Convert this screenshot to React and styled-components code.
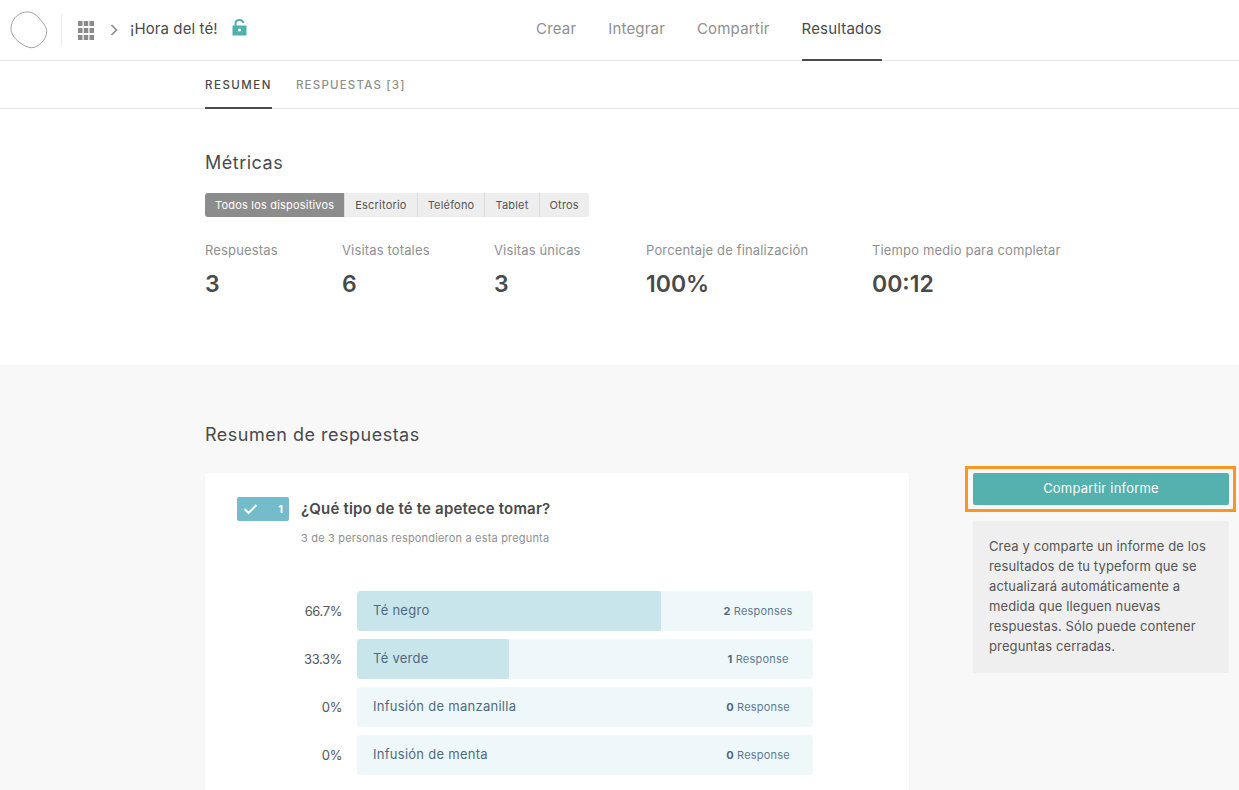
import React from "react";
import styled, { createGlobalStyle } from "styled-components";

const GlobalStyle = createGlobalStyle`
  html, body {
    margin: 0;
    padding: 0;
    background: #fff;
    font-family: Inter, "Liberation Sans", sans-serif;
    color: #4a4a4a;
  }
  * { box-sizing: border-box; }
`;

const tabs = ["Crear", "Integrar", "Compartir", "Resultados"];
const devices = ["Todos los dispositivos", "Escritorio", "Teléfono", "Tablet", "Otros"];
const metrics = [
  { label: "Respuestas", value: "3", width: 137 },
  { label: "Visitas totales", value: "6", width: 152 },
  { label: "Visitas únicas", value: "3", width: 152 },
  { label: "Porcentaje de finalización", value: "100%", width: 226 },
  { label: "Tiempo medio para completar", value: "00:12", width: 200 },
];
const answers = [
  { pct: 66.7, label: "66.7%", name: "Té negro", count: 2, unit: "Responses" },
  { pct: 33.3, label: "33.3%", name: "Té verde", count: 1, unit: "Response" },
  { pct: 0, label: "0%", name: "Infusión de manzanilla", count: 0, unit: "Response" },
  { pct: 0, label: "0%", name: "Infusión de menta", count: 0, unit: "Response" },
];

export default function App() {
  return (
    <Page>
      <GlobalStyle />
      <Header>
        <Brand>
          <svg width="38" height="38" viewBox="0 0 38 38" fill="none">
            <path
              d="M18.300 1C23 1.200 27 4.500 30 8.300C33 12 36.800 16 36.700 20C36.600 25 34.500 29 31.700 31.700C28.500 34.700 25 36.800 21.700 36.700C17.500 36.500 13.500 34.500 10 31.700C7.500 29.800 4.800 27.800 3.300 25C1.800 22 .7 19.500 1 16.700C1.300 13 2.800 9.500 5 6.700C8.500 2.800 13.500 .8 18.300 1Z"
              stroke="#a0a0a0"
              strokeWidth="1"
            />
          </svg>
          <Divider />
          <svg width="16" height="19" viewBox="0 0 16 19" fill="#8a8a8a">
            <rect x="0" y="0" width="4.500" height="5" />
            <rect x="5.750" y="0" width="4.500" height="5" />
            <rect x="11.500" y="0" width="4.500" height="5" />
            <rect x="0" y="7" width="4.500" height="5" />
            <rect x="5.750" y="7" width="4.500" height="5" />
            <rect x="11.500" y="7" width="4.500" height="5" />
            <rect x="0" y="14" width="4.500" height="5" />
            <rect x="5.750" y="14" width="4.500" height="5" />
            <rect x="11.500" y="14" width="4.500" height="5" />
          </svg>
          <Chevron width="8" height="12" viewBox="0 0 8 12" fill="none">
            <path d="M1.500 1L6.500 6L1.500 11" stroke="#8a8a8a" strokeWidth="1.600" />
          </Chevron>
          <FormName>¡Hora del té!</FormName>
          <LockIcon width="15" height="17" viewBox="0 0 15 17">
            <path d="M3.500 7V4.600C3.500 2.400 5.300 1 7.500 1C9.500 1 11 2.100 11.400 4" fill="none" stroke="#4fb0ae" strokeWidth="2" />
            <path fillRule="evenodd" fill="#4fb0ae" d="M.5 6.500H14.500V16.500H.5ZM7.500 9.500A1.500 1.500 0 1 0 7.500 12.500A1.500 1.500 0 1 0 7.500 9.500Z" />
          </LockIcon>
        </Brand>
        <MainNav>
          {tabs.map((t) => (
            <MainTab key={t} $active={t === "Resultados"}>{t}</MainTab>
          ))}
        </MainNav>
      </Header>

      <SubNav>
        <SubTab $active>RESUMEN</SubTab>
        <SubTab>RESPUESTAS [3]</SubTab>
      </SubNav>

      <Metrics>
        <SectionTitle>Métricas</SectionTitle>
        <DeviceFilter>
          {devices.map((d, i) => (
            <Device key={d} $active={i === 0}>{d}</Device>
          ))}
        </DeviceFilter>
        <MetricRow>
          {metrics.map((m) => (
            <Metric key={m.label} $width={m.width}>
              <MetricLabel>{m.label}</MetricLabel>
              <MetricValue>{m.value}</MetricValue>
            </Metric>
          ))}
        </MetricRow>
      </Metrics>

      <Summary>
        <SectionTitle>Resumen de respuestas</SectionTitle>
        <Columns>
          <Card>
            <QuestionHead>
              <QuestionBadge>
                <svg width="15" height="12" viewBox="0 0 15 12" fill="none">
                  <path d="M1.500 6L5.500 10L13.500 2" stroke="#fff" strokeWidth="2" />
                </svg>
                <span>1</span>
              </QuestionBadge>
              <QuestionTitle>¿Qué tipo de té te apetece tomar?</QuestionTitle>
            </QuestionHead>
            <QuestionMeta>3 de 3 personas respondieron a esta pregunta</QuestionMeta>
            <Answers>
              {answers.map((a) => (
                <AnswerRow key={a.name}>
                  <Percent>{a.label}</Percent>
                  <Bar>
                    <BarFill style={{ width: `${a.pct}%` }} />
                    <BarName>{a.name}</BarName>
                    <BarCount><b>{a.count}</b> {a.unit}</BarCount>
                  </Bar>
                </AnswerRow>
              ))}
            </Answers>
          </Card>
          <Aside>
            <Highlight>
              <ShareButton>Compartir informe</ShareButton>
            </Highlight>
            <InfoBox>
              Crea y comparte un informe de los resultados de tu typeform que se
              actualizará automáticamente a medida que lleguen nuevas respuestas.
              Sólo puede contener preguntas cerradas.
            </InfoBox>
          </Aside>
        </Columns>
      </Summary>
    </Page>
  );
}

const Page = styled.div`
  width: 1239px;
  height: 790px;
  overflow: hidden;
`;

const Header = styled.header`
  height: 61px;
  border-bottom: 1px solid #e8e8e8;
  display: flex;
  position: relative;
`;

const Brand = styled.div`
  width: 536px;
  display: flex;
  align-items: center;
  padding-left: 10px;
`;

const Divider = styled.span`
  width: 1px;
  height: 32px;
  background: #ececec;
  margin: 0 16px 0 13px;
`;

const Chevron = styled.svg`
  margin: 0 12px 0 16px;
`;

const FormName = styled.span`
  font-size: 15px;
  line-height: 20px;
  letter-spacing: 0.1px;
  color: #4a4a4a;
  margin: -3px 14px 0 0;
`;

const LockIcon = styled.svg`
  margin-top: -5px;
`;

const MainNav = styled.nav`
  display: flex;
  gap: 32px;
`;

const MainTab = styled.a`
  height: 61px;
  line-height: 57px;
  font-size: 15px;
  letter-spacing: 0.18px;
  color: ${(p) => (p.$active ? "#4a4a4a" : "#8f8f8f")};
  border-bottom: 2px solid ${(p) => (p.$active ? "#4a4a4a" : "transparent")};
`;

const SubNav = styled.nav`
  height: 48px;
  border-bottom: 1px solid #e8e8e8;
  padding-left: 205px;
  display: flex;
  gap: 24px;
`;

const SubTab = styled.a`
  height: 48px;
  line-height: 48px;
  font-size: 11.500px;
  font-weight: 500;
  letter-spacing: ${(p) => (p.$active ? "1.5px" : "1.2px")};
  color: ${(p) => (p.$active ? "#4a4a4a" : "#8f8f8f")};
  border-bottom: 2px solid ${(p) => (p.$active ? "#4a4a4a" : "transparent")};
`;

const Metrics = styled.section`
  height: 256px;
  padding: 42px 0 0 205px;
`;

const SectionTitle = styled.h2`
  margin: 0;
  font-size: 18px;
  line-height: 24px;
  font-weight: 400;
  letter-spacing: 0.5px;
  color: #4a4a4a;
`;

const DeviceFilter = styled.div`
  display: inline-flex;
  height: 24px;
  margin-top: 18px;
  border-radius: 3px;
  overflow: hidden;
  background: #eeeeee;
`;

const Device = styled.span`
  padding: 0 10px;
  font-size: 11px;
  line-height: 24px;
  letter-spacing: 0.2px;
  color: ${(p) => (p.$active ? "#fff" : "#555")};
  background: ${(p) => (p.$active ? "#8c8c8c" : "transparent")};
  & + & {
    border-left: 1px solid #dcdcdc;
  }
`;

const MetricRow = styled.div`
  display: flex;
  margin-top: 24px;
`;

const Metric = styled.div`
  width: ${(p) => p.$width}px;
`;

const MetricLabel = styled.div`
  font-size: 13px;
  line-height: 18px;
  letter-spacing: 0.15px;
  color: #8f8f8f;
  white-space: nowrap;
`;

const MetricValue = styled.div`
  margin-top: 10px;
  font-size: 23px;
  line-height: 30px;
  font-weight: 600;
  color: #4a4a4a;
`;

const Summary = styled.section`
  height: 425px;
  background: #f8f8f8;
  padding: 58px 0 0 205px;
`;

const Columns = styled.div`
  display: flex;
  align-items: flex-start;
  margin-top: 26px;
`;

const Card = styled.article`
  width: 704px;
  height: 400px;
  flex: none;
  background: #fff;
  border-radius: 3px;
  box-shadow: 0 1px 3px rgba(0, 0, 0, 0.05);
  padding: 24px 0 0 32px;
`;

const QuestionHead = styled.div`
  display: flex;
  align-items: center;
`;

const QuestionBadge = styled.div`
  width: 52px;
  height: 24px;
  padding: 0 6px;
  margin-right: 12px;
  border-radius: 2px;
  background: #74bcc9;
  color: #fff;
  font-size: 11px;
  font-weight: 700;
  display: flex;
  align-items: center;
  justify-content: space-between;
`;

const QuestionTitle = styled.h3`
  margin: 0;
  font-size: 15px;
  line-height: 24px;
  font-weight: 600;
  letter-spacing: 0.18px;
  color: #4a4a4a;
`;

const QuestionMeta = styled.p`
  margin: 9px 0 0 64px;
  font-size: 11px;
  line-height: 16px;
  letter-spacing: 0.18px;
  color: #8f8f8f;
`;

const Answers = styled.div`
  margin-top: 45px;
  display: flex;
  flex-direction: column;
  gap: 8px;
`;

const AnswerRow = styled.div`
  display: flex;
  align-items: center;
  gap: 15px;
`;

const Percent = styled.span`
  width: 105px;
  text-align: right;
  font-size: 13px;
  line-height: 18px;
  letter-spacing: -0.4px;
  color: #555;
  padding-bottom: 1px;
`;

const Bar = styled.div`
  position: relative;
  width: 456px;
  height: 40px;
  padding-left: 16px;
  border-radius: 4px;
  background: #eef8fa;
  overflow: hidden;
  display: flex;
  align-items: center;
  justify-content: space-between;
`;

const BarFill = styled.div`
  position: absolute;
  left: 0;
  top: 0;
  bottom: 0;
  background: #c8e5eb;
  border-radius: 2px;
`;

const BarName = styled.span`
  position: relative;
  font-size: 13px;
  line-height: 18px;
  letter-spacing: 0.27px;
  color: #4f6a80;
  padding-bottom: 2px;
`;

const BarCount = styled.span`
  position: relative;
  width: 110px;
  text-align: center;
  font-size: 11px;
  letter-spacing: 0.2px;
  color: #5f7a90;
  b {
    font-weight: 700;
    color: #4f6a80;
  }
`;

const Aside = styled.aside`
  width: 271px;
  margin: -7px 0 0 56px;
`;

const Highlight = styled.div`
  width: 271px;
  height: 46px;
  border: 3px solid #fb9622;
  padding: 4px 4px 4px 5px;
`;

const ShareButton = styled.button`
  display: block;
  width: 256px;
  height: 32px;
  border: 0;
  padding: 0 0 2px;
  border-radius: 2px;
  background: #54b1ad;
  color: #fff;
  font-family: inherit;
  font-size: 13px;
  letter-spacing: 0.2px;
`;

const InfoBox = styled.div`
  width: 256px;
  height: 152px;
  margin: 9px 0 0 8px;
  padding: 15px 16px;
  border-radius: 2px;
  background: #efefef;
  font-size: 13px;
  line-height: 20px;
  letter-spacing: 0.12px;
  color: #555;
`;
